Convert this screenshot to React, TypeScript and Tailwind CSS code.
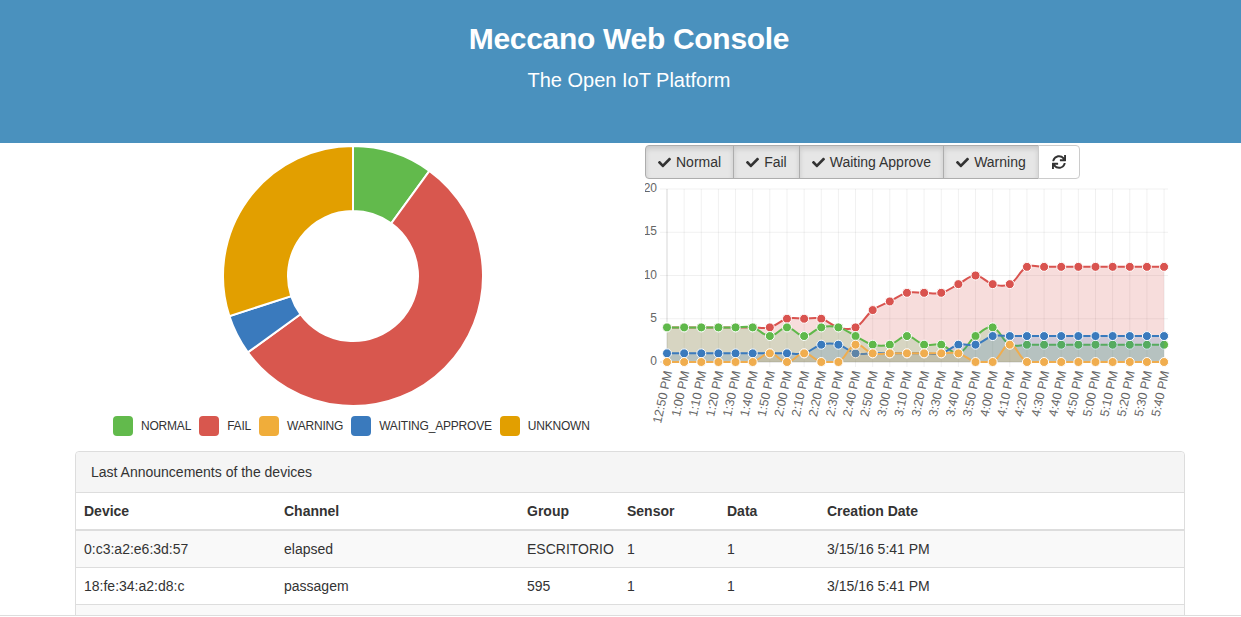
import React from 'react';
import { FaCheck, FaSync } from 'react-icons/fa';

const COLORS = {
  normal: '#5fb84a',
  fail: '#d9534f',
  warning: '#f0ad4e',
  waiting: '#3a7abd',
  unknown: '#e29f00',
};

// values per 10 min, 12:50 PM -> 5:40 PM
const series = [
  { key: 'fail', color: COLORS.fail, fill: 'rgba(217,83,79,0.2)', data: [4, 4, 4, 4, 4, 4, 4, 5, 5, 5, 4, 4, 6, 7, 8, 8, 8, 9, 10, 9, 9, 11, 11, 11, 11, 11, 11, 11, 11, 11] },
  { key: 'normal', color: COLORS.normal, fill: 'rgba(92,184,92,0.2)', data: [4, 4, 4, 4, 4, 4, 3, 4, 3, 4, 4, 3, 2, 2, 3, 2, 2, 1, 3, 4, 2, 2, 2, 2, 2, 2, 2, 2, 2, 2] },
  { key: 'waiting', color: COLORS.waiting, fill: 'rgba(51,122,183,0.2)', data: [1, 1, 1, 1, 1, 1, 1, 1, 1, 2, 2, 1, 1, 1, 1, 1, 1, 2, 2, 3, 3, 3, 3, 3, 3, 3, 3, 3, 3, 3] },
  { key: 'warning', color: COLORS.warning, fill: 'rgba(240,173,78,0.2)', data: [0, 0, 0, 0, 0, 0, 1, 0, 1, 0, 0, 2, 1, 1, 1, 1, 1, 1, 0, 0, 2, 0, 0, 0, 0, 0, 0, 0, 0, 0] },
];

const labels = Array.from({ length: 30 }, (_, i) => {
  const total = 12 * 60 + 50 + i * 10;
  let h = Math.floor(total / 60);
  const m = total % 60;
  if (h > 12) h -= 12;
  return `${h}:${m.toString().padStart(2, '0')} PM`;
});

const X0 = 667;
const STEP = 17.14;
const Y0 = 363;
const UNIT = 8.65;
const px = (i: number) => X0 + i * STEP;
const py = (v: number) => Y0 - v * UNIT;

type Pt = { x: number; y: number };

// same control points as the old Chart.js line charts (tension 0.4)
const spline = (a: Pt, b: Pt, c: Pt, t: number) => {
  const d01 = Math.hypot(b.x - a.x, b.y - a.y);
  const d12 = Math.hypot(c.x - b.x, c.y - b.y);
  const sum = d01 + d12 || 1;
  const fa = (t * d01) / sum;
  const fb = (t * d12) / sum;
  const clamp = (y: number) => Math.min(Y0, Math.max(190, y));
  return {
    inner: { x: b.x - fa * (c.x - a.x), y: clamp(b.y - fa * (c.y - a.y)) },
    outer: { x: b.x + fb * (c.x - a.x), y: clamp(b.y + fb * (c.y - a.y)) },
  };
};

const linePath = (data: number[]) => {
  const pts = data.map((v, i) => ({ x: px(i), y: py(v) }));
  const cps = pts.map((p, i) =>
    spline(pts[Math.max(0, i - 1)], p, pts[Math.min(pts.length - 1, i + 1)], 0.4),
  );
  let d = `M${pts[0].x},${pts[0].y}`;
  for (let i = 1; i < pts.length; i++) {
    const o = cps[i - 1].outer;
    const n = cps[i].inner;
    d += ` C${o.x},${o.y} ${n.x},${n.y} ${pts[i].x},${pts[i].y}`;
  }
  return d;
};

const LineChart: React.FC = () => {
  const lastX = px(29);
  return (
    <svg width={540} height={252} viewBox="645 180 540 252" className="block">
      {/* grid */}
      {[0, 5, 10, 15, 20].map((v) => (
        <g key={v}>
          <line x1={660} x2={1168} y1={py(v)} y2={py(v)} stroke="rgba(0,0,0,0.06)" />
          <text
            x={657}
            y={py(v)}
            textAnchor="end"
            dominantBaseline="middle"
            fontSize={12}
            fill="#666"
            fontFamily="'Liberation Sans', Arial, sans-serif"
          >
            {v}
          </text>
        </g>
      ))}
      {labels.map((l, i) => (
        <g key={l}>
          <line x1={px(i)} x2={px(i)} y1={190} y2={368} stroke="rgba(0,0,0,0.06)" />
          <text
            transform={`translate(${px(i) + 2},372) rotate(-78)`}
            textAnchor="end"
            dominantBaseline="middle"
            fontSize={12.5}
            fill="#666"
            fontFamily="'Liberation Sans', Arial, sans-serif"
          >
            {l}
          </text>
        </g>
      ))}
      <line x1={X0} x2={X0} y1={190} y2={368} stroke="rgba(0,0,0,0.1)" />
      <line x1={660} x2={1168} y1={Y0} y2={Y0} stroke="rgba(0,0,0,0.1)" />

      {series.map((s) => {
        const d = linePath(s.data);
        return (
          <g key={s.key}>
            <path d={`${d} L${lastX},${Y0} L${X0},${Y0} Z`} fill={s.fill} />
            <path d={d} fill="none" stroke={s.color} strokeWidth={2} />
            {s.data.map((v, i) => (
              <circle key={i} cx={px(i)} cy={py(v)} r={4.5} fill={s.color} stroke="#fff" strokeWidth={1} />
            ))}
          </g>
        );
      })}
    </svg>
  );
};

const pieData = [
  { value: 2, color: '#62ba4c' },
  { value: 11, color: '#d8574e' },
  { value: 1, color: '#3a7abd' },
  { value: 6, color: '#e29f00' },
];

const Doughnut: React.FC = () => {
  const cx = 131;
  const cy = 131;
  const r = 130;
  const ir = 65;
  const total = pieData.reduce((a, b) => a + b.value, 0);
  let start = -Math.PI / 2;
  return (
    <svg width={262} height={262} className="block mx-auto">
      {pieData.map((p, i) => {
        const end = start + (p.value / total) * Math.PI * 2;
        const large = end - start > Math.PI ? 1 : 0;
        const d = [
          `M${cx + r * Math.cos(start)},${cy + r * Math.sin(start)}`,
          `A${r},${r} 0 ${large} 1 ${cx + r * Math.cos(end)},${cy + r * Math.sin(end)}`,
          `L${cx + ir * Math.cos(end)},${cy + ir * Math.sin(end)}`,
          `A${ir},${ir} 0 ${large} 0 ${cx + ir * Math.cos(start)},${cy + ir * Math.sin(start)}`,
          'Z',
        ].join(' ');
        start = end;
        return <path key={i} d={d} fill={p.color} stroke="#fff" strokeWidth={2} />;
      })}
    </svg>
  );
};

const legend = [
  { label: 'NORMAL', color: '#62ba4c' },
  { label: 'FAIL', color: '#d8574e' },
  { label: 'WARNING', color: '#f0ad3a' },
  { label: 'WAITING_APPROVE', color: '#3a7abd' },
  { label: 'UNKNOWN', color: '#e29f00' },
];

const filters = ['Normal', 'Fail', 'Waiting Approve', 'Warning'];

const rows = [
  ['0:c3:a2:e6:3d:57', 'elapsed', 'ESCRITORIO', '1', '1', '3/15/16 5:41 PM'],
  ['18:fe:34:a2:d8:c', 'passagem', '595', '1', '1', '3/15/16 5:41 PM'],
  ['', '', '', '', '', ''],
];

const App: React.FC = () => {
  return (
    <div className="h-[617px] overflow-hidden bg-white font-['Liberation_Sans',Arial,sans-serif] text-[#333]">
      <div className="h-[616px] overflow-hidden border-b border-[#ddd]">
        {/* Header */}
        <div className="h-[143px] bg-[#4a91be] pl-[17px] pt-[21px] text-center text-white">
          <h1 className="text-[30px] font-bold leading-[36px] tracking-[-0.3px]">Meccano Web Console</h1>
          <p className="mt-[9px] text-[20px] leading-[28px]">The Open IoT Platform</p>
        </div>

        <div className="ml-[75px] mt-[2px] w-[1110px]">
          <div className="flex h-[306px]">
            {/* Doughnut + legend */}
            <div className="w-[555px] shrink-0">
              <Doughnut />
              <div className="mt-[9px] flex items-center pl-[38px] text-[12px] tracking-[-0.2px]">
                {legend.map((l) => (
                  <div key={l.label} className="mr-[8px] flex items-center">
                    <span className="h-[20px] w-[20px] rounded-[4px]" style={{ backgroundColor: l.color }} />
                    <span className="ml-[8px] leading-[20px]">{l.label}</span>
                  </div>
                ))}
              </div>
            </div>

            {/* Line chart */}
            <div className="w-[555px] shrink-0 pl-[15px]">
              <div className="flex h-[34px]">
                {filters.map((f, i) => (
                  <button
                    key={f}
                    className={`flex items-center gap-[5px] border border-[#adadad] bg-[#e6e6e6] px-[12px] text-[14px] leading-[20px] text-[#333] shadow-[inset_0_3px_5px_rgba(0,0,0,0.125)] ${
                      i === 0 ? 'rounded-l-[4px]' : '-ml-px'
                    }`}
                  >
                    <FaCheck size={13} />
                    {f}
                  </button>
                ))}
                <button className="-ml-px flex items-center rounded-r-[4px] border border-[#ccc] bg-white px-[13px] text-[#333]">
                  <FaSync size={14} />
                </button>
              </div>
              <LineChart />
            </div>
          </div>

          {/* Last announcements */}
          <div className="rounded-[4px] border border-[#ddd] text-[14px]">
            <div className="rounded-t-[4px] border-b border-[#ddd] bg-[#f5f5f5] px-[15px] py-[10px] leading-[20px]">
              Last Announcements of the devices
            </div>
            <table className="w-full table-fixed border-collapse leading-[20px]">
              <colgroup>
                <col className="w-[200px]" />
                <col className="w-[243px]" />
                <col className="w-[100px]" />
                <col className="w-[100px]" />
                <col className="w-[100px]" />
                <col />
              </colgroup>
              <thead>
                <tr>
                  {['Device', 'Channel', 'Group', 'Sensor', 'Data', 'Creation Date'].map((h) => (
                    <th key={h} className="border-b-2 border-[#ddd] p-[8px] text-left font-bold">
                      {h}
                    </th>
                  ))}
                </tr>
              </thead>
              <tbody>
                {rows.map((r, i) => (
                  <tr key={i} className={i % 2 === 0 ? 'bg-[#f9f9f9]' : 'bg-white'}>
                    {r.map((c, j) => (
                      <td key={j} className="h-[37px] border-t border-[#ddd] px-[8px]">
                        {c}
                      </td>
                    ))}
                  </tr>
                ))}
              </tbody>
            </table>
          </div>
        </div>
      </div>
    </div>
  );
};

export default App;
